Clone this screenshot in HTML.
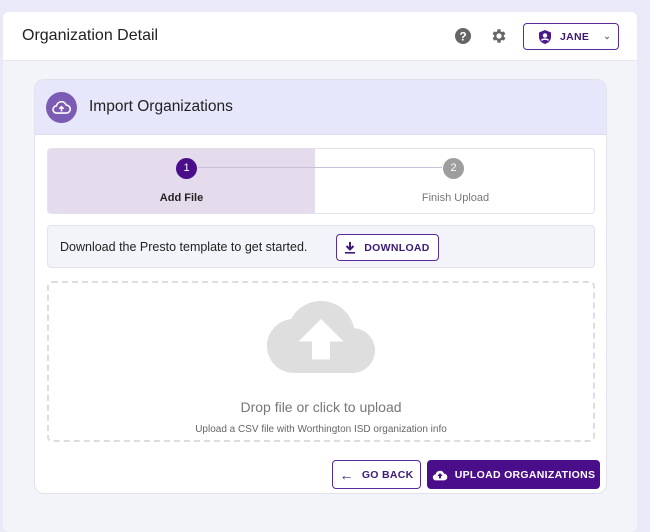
<!DOCTYPE html><html><head><style>
*{box-sizing:border-box;margin:0;padding:0}
body{width:650px;height:518px;background:#e9e9f8;font-family:"Liberation Sans",sans-serif;position:relative;overflow:hidden}
.abs{position:absolute}
.panel{left:3px;top:12px;width:634px;height:520px;background:#f3f4f9;border-radius:6px;overflow:hidden}
.hdr{left:0;top:0;width:634px;height:49px;background:#fff;border-bottom:1px solid #e6e6ee}
.btn{display:flex;align-items:center;justify-content:center;font-weight:bold;font-size:10.5px;letter-spacing:.3px;border-radius:4px;white-space:nowrap}
</style></head><body>
<div class="abs panel">
 <div class="abs hdr">
  <div class="abs" style="left:19px;top:15px;font-size:16px;color:#222">Organization Detail</div>
  <svg class="abs" style="left:451px;top:15px" width="18" height="18" viewBox="0 0 18 18"><circle cx="9" cy="9" r="8" fill="#666"/><text x="9" y="13.5" text-anchor="middle" font-size="12" font-weight="bold" fill="#fff" font-family="Liberation Sans">?</text></svg>
  <svg class="abs" style="left:487px;top:15px" width="18" height="18" viewBox="0 0 24 24"><path fill="#666" d="M19.4 13a7.5 7.5 0 000-2l2.1-1.6-2-3.5-2.5 1a7 7 0 00-1.7-1L15 3h-4l-.4 2.9a7 7 0 00-1.7 1l-2.5-1-2 3.5L6.6 11a7.5 7.5 0 000 2l-2.1 1.6 2 3.5 2.5-1a7 7 0 001.7 1L11 21h4l.4-2.9a7 7 0 001.7-1l2.5 1 2-3.5zM13 15.5a3.5 3.5 0 110-7 3.5 3.5 0 010 7z" transform="translate(-1 0)"/></svg>
  <div class="abs btn" style="left:520px;top:11px;width:96px;height:27px;border:1px solid #5a2a9a;color:#3d1a78;justify-content:flex-start;padding-left:14px">
   <svg width="14" height="16" viewBox="0 0 14 16"><path d="M7 1L13 3.5V8c0 3.5-2.7 6-6 7-3.3-1-6-3.5-6-7V3.5z" fill="#4a1a8a"/><circle cx="7" cy="6.5" r="2.2" fill="#fff"/><path d="M3.5 11.5c1-1.8 6-1.8 7 0" stroke="#fff" stroke-width="1.5" fill="none"/></svg>
   <span style="margin-left:8px;font-weight:bold">JANE</span><span style="margin-left:14px;font-size:9px;color:#777">&#8964;</span>
  </div>
 </div>
</div>
<div class="abs" style="left:34px;top:79px;width:573px;height:415px;background:#fff;border:1px solid #e2e2ec;border-radius:10px;overflow:hidden">
 <div class="abs" style="left:0;top:0;width:573px;height:55px;background:#e6e7fb;border-bottom:1px solid #dcdcef"></div>
 <div class="abs" style="left:11px;top:12px;width:31px;height:31px;border-radius:50%;background:#7b5bb3"></div>
 <svg class="abs" style="left:17px;top:19px" width="19" height="17" viewBox="0 0 24 20"><path d="M6 17a4.5 4.5 0 01-.5-9A6.5 6.5 0 0118 7a4.8 4.8 0 010 10z" fill="none" stroke="#fff" stroke-width="2"/><path d="M12 15V9M9.3 11.5L12 9l2.7 2.5" stroke="#fff" stroke-width="2" fill="none"/></svg>
 <div class="abs" style="left:54px;top:18px;font-size:15.5px;color:#222">Import Organizations</div>
 <div class="abs" style="left:12px;top:68px;width:548px;height:66px;border:1px solid #e2e2ea;border-radius:4px;overflow:hidden">
  <div class="abs" style="left:0;top:0;width:267px;height:66px;background:#e4dcec"></div>
  <div class="abs" style="left:150px;top:18px;width:244px;height:1px;background:#c9bfd6"></div>
  <div class="abs" style="left:128px;top:9px;width:21px;height:21px;border-radius:50%;background:#4a0e8a;color:#fff;font-size:11px;text-align:center;line-height:21px">1</div>
  <div class="abs" style="left:395px;top:9px;width:21px;height:21px;border-radius:50%;background:#9e9e9e;color:#fff;font-size:11px;text-align:center;line-height:21px">2</div>
  <div class="abs" style="left:0;top:43px;width:267px;text-align:center;font-size:11px;font-weight:bold;color:#222">Add File</div>
  <div class="abs" style="left:267px;top:43px;width:281px;text-align:center;font-size:11px;color:#777">Finish Upload</div>
 </div>
 <div class="abs" style="left:12px;top:145px;width:548px;height:43px;background:#f3f4f9;border:1px solid #e2e2ea;border-radius:4px">
  <div class="abs" style="left:12px;top:14px;font-size:12.5px;color:#222">Download the Presto template to get started.</div>
  <div class="abs btn" style="left:288px;top:8px;width:103px;height:27px;border:1px solid #5a2a9a;background:#fff;color:#3d1a78">
   <svg width="10" height="12" viewBox="0 0 10 12"><path d="M5 0v7M1.5 4L5 7.5 8.5 4" stroke="#3d1a78" stroke-width="2" fill="none"/><rect x="0" y="10" width="10" height="1.6" fill="#3d1a78"/></svg><span style="margin-left:9px">DOWNLOAD</span></div>
 </div>
 <div class="abs" style="left:12px;top:201px;width:548px;height:161px;border:2px dashed #dcdce2;border-radius:5px">
  <svg class="abs" style="left:218px;top:18px" width="108" height="72" viewBox="0 4 24 16"><path fill="#dedede" d="M19.35 10.04C18.67 6.59 15.64 4 12 4 9.11 4 6.6 5.64 5.35 8.04 2.34 8.36 0 10.91 0 14c0 3.31 2.69 6 6 6h13c2.76 0 5-2.24 5-5 0-2.64-2.05-4.78-4.65-4.96z"/><path fill="#fff" d="M14 13v4h-4v-4H7l5-5 5 5h-3z"/></svg>
  <div class="abs" style="left:0;top:116px;width:544px;text-align:center;font-size:14px;color:#777">Drop file or click to upload</div>
  <div class="abs" style="left:0;top:141px;width:544px;text-align:center;font-size:10px;color:#666">Upload a CSV file with Worthington ISD organization info</div>
 </div>
 <div class="abs btn" style="left:297px;top:380px;width:89px;height:29px;border:1px solid #5a2a9a;color:#3d1a78;background:#fff">
  <span style="font-size:14px;font-weight:normal">&#8592;</span><span style="margin-left:8px">GO BACK</span></div>
 <div class="abs btn" style="left:392px;top:380px;width:173px;height:29px;background:#4a0e8a;color:#fff">
  <svg width="16" height="12" viewBox="0 0 24 18"><path d="M6 17a4.5 4.5 0 01-.5-9A6.5 6.5 0 0118 7a4.8 4.8 0 010 10z" fill="#fff"/><path d="M12 6L8 10.5h2.5V14h3v-3.5H16z" fill="#4a0e8a"/></svg><span style="margin-left:7px">UPLOAD ORGANIZATIONS</span></div>
</div>
</body></html>
